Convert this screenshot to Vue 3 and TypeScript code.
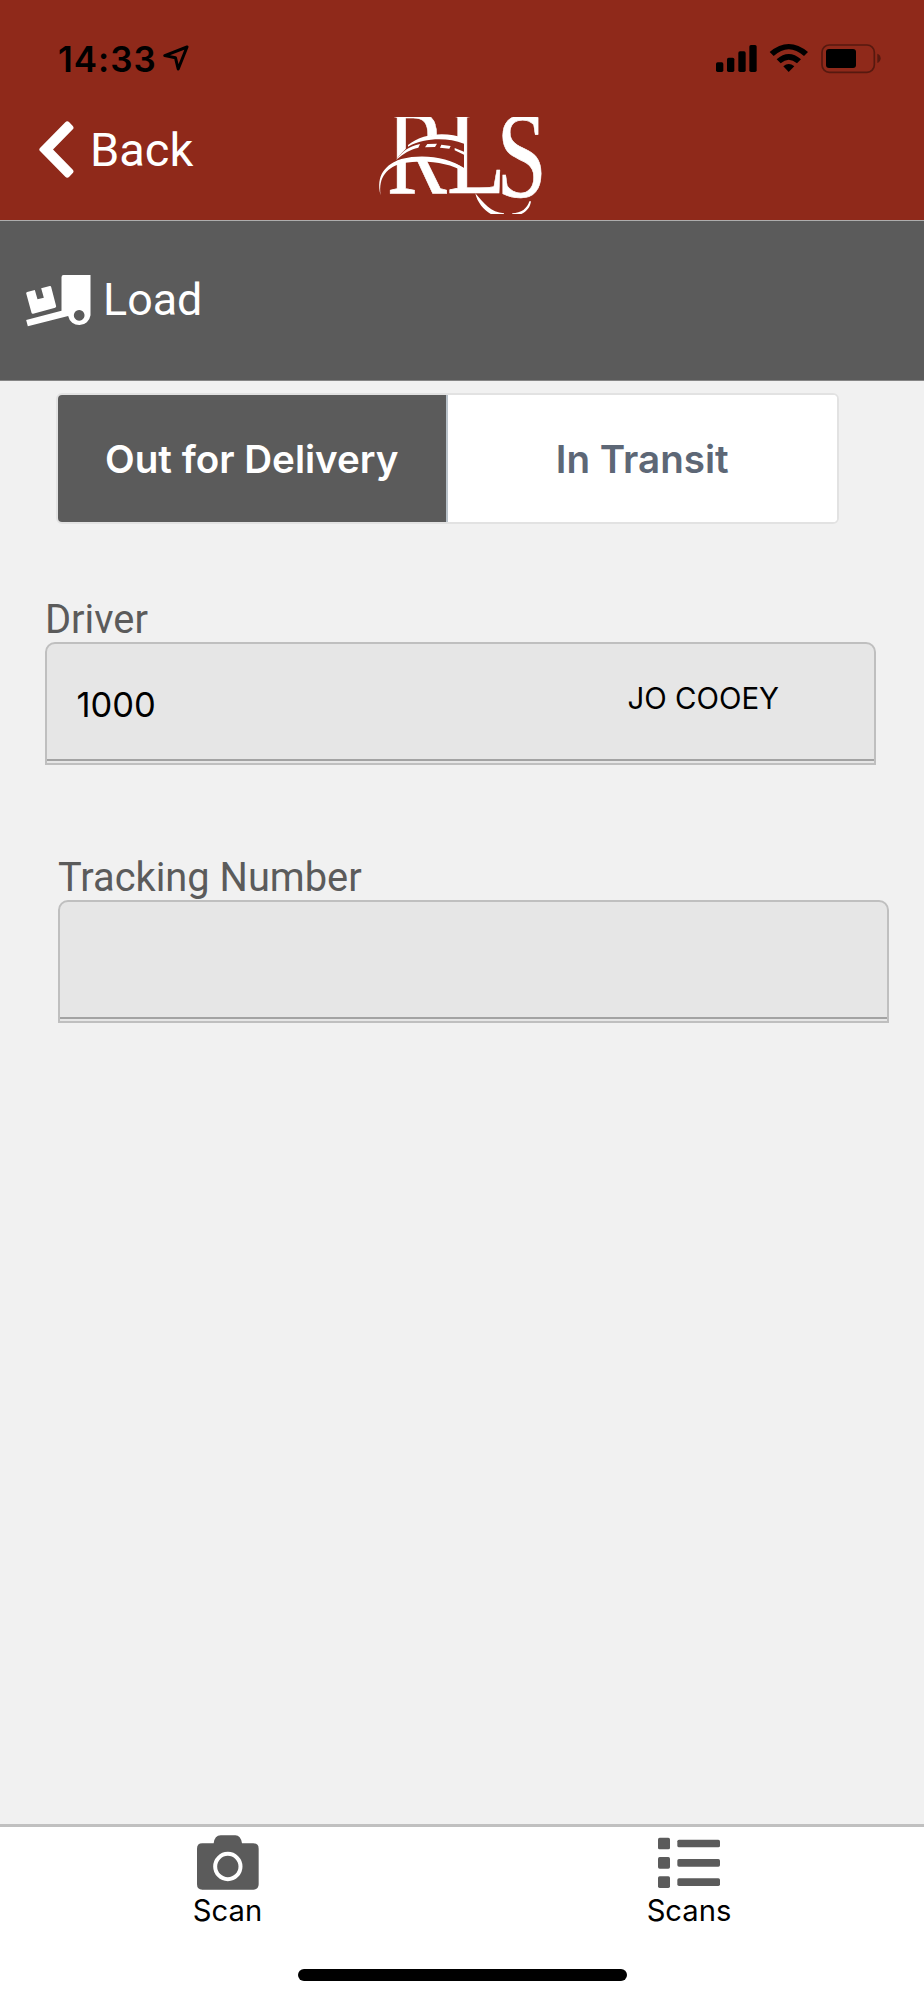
<script setup lang="ts">
const segments = [
  { label: 'Out for Delivery', active: true },
  { label: 'In Transit', active: false },
]
</script>

<template>
  <div class="app">
    <header class="top">
      <div class="status">
        <span class="time">14:33</span>
        <svg class="loc" viewBox="0 0 26 26"><path d="M24 2 L1.800 10.600 L12.500 12.800 L15.200 24 Z" fill="none" stroke="#000" stroke-width="3" stroke-linejoin="round" /></svg>
        <svg class="indicators" viewBox="0 0 660 180">
          <g>
            <rect x="78" y="97" width="22" height="29" rx="5" />
            <rect x="111" y="83" width="22" height="43" rx="5" />
            <rect x="145" y="64" width="22" height="62" rx="5" />
            <rect x="178" y="45" width="22" height="81" rx="5" />
          </g>
          <path d="M239 66 Q296 18 354 66 L342 78 Q296 37 251 78 Z" />
          <path d="M260 88 Q296 56 333 88 L321 100 Q296 78 272 100 Z" />
          <path d="M280 109 Q296 95 313 109 L296 126 Z" />
          <rect x="396" y="45" width="157" height="82" rx="22" fill="none" stroke="#57190f" stroke-width="5" />
          <rect x="408" y="57" width="90" height="57" rx="9" />
          <path d="M562 71 Q572 75 572 85 Q572 95 562 99 Z" fill="#57190f" />
        </svg>
      </div>
      <nav class="nav">
        <div class="back">
          <svg viewBox="0 0 105 172"><path d="M2 82 L79 4 Q85 -2 91 4 L101 14 Q107 20 101 26 L42 86 L101 146 Q107 152 101 158 L91 168 Q85 174 79 168 L2 90 Q-1 86 2 82 Z" fill="#fff" /></svg>
          <span>Back</span>
        </div>
        <svg class="logo" viewBox="0 0 600 375">
          <defs><clipPath id="logo-crop"><rect x="0" y="51" width="600" height="291" /></clipPath></defs>
          <g clip-path="url(#logo-crop)" fill="#fff">
            <text class="mark" transform="translate(81 280) scale(.73 1)">R</text>
            <text class="mark" transform="translate(261 280) scale(.78 1)">L</text>
            <text class="mark" transform="translate(410 292) scale(.73 1)">S</text>
            <path class="road" d="M104 184 C140 140 170 108 240 104 C275 104 300 112 312 122 L312 206 C275 178 205 160 104 184 Z" />
            <path d="M144 135 C190 98 262 95 312 115 L312 131 C260 112 195 113 144 140 Z" />
            <path d="M108 180 C126 155 148 138 180 132 L175 143 C150 148 132 160 108 180 Z" />
            <path d="M202 132 L231 131 L225 141 L195 142 Z M244 134 L272 138 L268 146 L240 143 Z M284 144 L312 155 V164 L284 151 Z" />
            <path d="M62 286 C46 226 78 192 124 177 C192 160 265 173 314 205 V216 C265 187 195 178 130 189 C82 201 54 230 62 286 Z" />
            <path d="M346 280 C372 310 392 338 432 340 V346 H400 C376 335 352 310 346 280 Z" />
            <path d="M508 304 C502 325 484 340 456 340 L462 348 C492 344 510 328 513 304 Z" />
          </g>
        </svg>
      </nav>
    </header>
    <section class="title">
      <svg class="truck" viewBox="78 195 194 156">
        <path fill="#fff" fill-rule="evenodd" d="M190 195 H271 V316 A34 34 0 0 1 204 318 L83 349 L78 330 L184 302 V202 Q184 195 190 195 Z M237 300 a16 16 0 1 0 .1 0 Z" />
        <path fill="#fff" d="M81 246 L104 240 L112 268 L131 263 L123 235 L149 228 Q152 227 153 231 L168 289 Q168 292 165 293 L99 311 Q95 312 94 308 L78 250 Q78 247 81 246 Z" />
      </svg>
      <span>Load</span>
    </section>
    <main class="body">
      <div class="segments">
        <button v-for="s in segments" :key="s.label" :class="['segment', { active: s.active }]">{{ s.label }}</button>
      </div>
      <div class="field driver">
        <label>Driver</label>
        <div class="box"><div class="inner"><span class="code">1000</span><span class="name">JO COOEY</span></div></div>
      </div>
      <div class="field tracking">
        <label>Tracking Number</label>
        <div class="box"><div class="inner"></div></div>
      </div>
    </main>
    <footer class="tabs">
      <div class="tab-row">
        <div class="tab">
          <svg viewBox="140 75 186 163"><path fill="#5b5b5b" d="M156 99 H190 Q193 75 211 75 H255 Q271 75 275 99 H309 Q325 99 325 115 V222 Q325 238 309 238 H156 Q140 238 140 222 V115 Q140 99 156 99 Z" /><circle cx="232.500" cy="168.500" r="38" fill="none" stroke="#fff" stroke-width="12" /></svg>
          <span>Scan</span>
        </div>
        <div class="tab">
          <svg viewBox="235 75 186 163"><g fill="#5b5b5b"><template v-for="y in [82, 140, 198]" :key="y"><rect x="235" :y="y" width="36" height="35" rx="5" /><rect x="293" :y="y + 6" width="128" height="23" rx="5" /></template></g></svg>
          <span>Scans</span>
        </div>
      </div>
      <div class="home"></div>
    </footer>
  </div>
</template>

<style>
body { margin: 0; background: #f1f1f1; }
</style>

<style scoped>
.app { width: 924px; height: 2000px; display: flex; flex-direction: column; background: #f1f1f1; font-family: Roboto, "Liberation Sans", sans-serif; overflow: hidden; }
.top { box-sizing: border-box; height: 221px; background: #8f291a; border-bottom: 1px solid #adadad; flex: none; }
.status { height: 100px; box-sizing: border-box; display: flex; padding: 30px 14px 0 58px; }
.time { font: 600 35px/58px Inter, sans-serif; letter-spacing: 1px; width: 105px; white-space: nowrap; }
.loc { width: 26px; height: 26px; margin-top: 15px; }
.indicators { width: 220px; height: 60px; margin-left: auto; }
.nav { display: flex; height: 120px; }
.back { width: 360px; display: flex; box-sizing: border-box; padding-left: 39px; color: #fff; font-size: 47px; line-height: 99px; }
.back svg { width: 35px; height: 57px; margin: 21px 16px 0 0; }
.logo { width: 200px; height: 125px; flex: none; }
.mark { font: 369px "Liberation Serif", serif; stroke: #fff; stroke-width: 2px; }
.road { fill: #8f291a; }
.title { box-sizing: border-box; height: 160px; flex: none; background: #5b5b5b; border-bottom: 1px solid #868686; color: #fff; display: flex; padding-left: 26px; font-size: 44.800px; line-height: 157px; }
.truck { width: 65px; height: 52px; margin: 54px 12px 0 0; }
.body { flex: 1; min-height: 0; padding-top: 12px; }
.segments { box-sizing: border-box; width: 783px; height: 131px; margin-left: 56px; border: 2px solid #e2e2e2; border-radius: 6px; display: flex; overflow: hidden; background: #fff; }
.segment { box-sizing: border-box; width: 50%; border: 0; background: #fff; color: #5d6776; padding: 0; font: 600 38.600px Inter, sans-serif; }
.segment.active { background: #5b5b5b; color: #fff; border-right: 2px solid #b9c2ca; }
.field label { display: block; height: 48px; font-size: 39.800px; line-height: 51px; color: #5b5b5b; }
.driver { margin: 70px 0 0 45px; }
.tracking { margin: 87px 0 0 58px; }
.box { box-sizing: border-box; width: 831px; height: 123px; border: 2px solid #bfbfbf; border-radius: 10px 10px 0 0; background: #e6e6e6; }
.inner { box-sizing: border-box; height: 117px; border-bottom: 2px solid #a3a3a3; display: flex; font-family: Inter, sans-serif; color: #000; }
.code { font-size: 34.500px; line-height: 121px; padding-left: 29.500px; width: 80px; }
.name { font-size: 29.400px; line-height: 109px; margin-left: 471px; }
.tabs { height: 176px; box-sizing: border-box; background: #fff; border-top: 3px solid #c0c0c0; flex: none; }
.tab-row { display: grid; grid-template-columns: 455px 468px; height: 142px; }
.tab { display: flex; flex-direction: column; align-items: center; padding-top: 8px; font: 29.200px/42px Inter, sans-serif; }
.tab svg { width: 62px; height: 55px; }
.home { width: 329px; height: 12px; border-radius: 6px; background: #000; margin: 0 auto; }
</style>
